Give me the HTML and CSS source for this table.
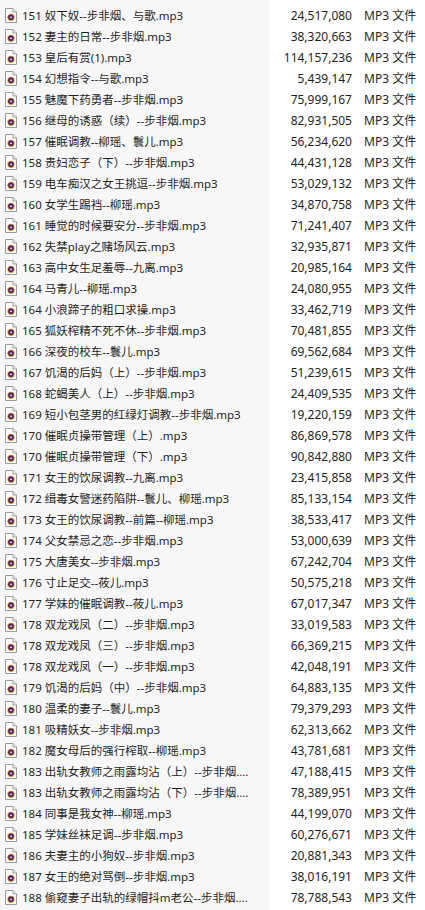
FILE: index.html
```html
<!DOCTYPE html>
<html lang="zh-CN">
<head>
<meta charset="utf-8">
<title>文件列表</title>
<link rel="stylesheet" href="styles.css">
</head>
<body>
<svg width="0" height="0" class="defs" aria-hidden="true">
  <defs>
    <symbol id="mp3" viewBox="0 0 12 15">
      <path d="M0.5 0.5 H8 L11.5 4 V14.5 H0.5 Z" fill="#fff" stroke="#9a9a9a"/>
      <path d="M8 0.5 V4 H11.5" fill="#eee" stroke="#9a9a9a"/>
      <circle cx="6" cy="9.3" r="3.6" fill="#d98a2b"/>
      <circle cx="6" cy="9.3" r="2.7" fill="#4b2466"/>
      <circle cx="6" cy="9.3" r="0.9" fill="#fff"/>
    </symbol>
  </defs>
</svg>
<div class="list">
  <div class="row"><div class="name"><svg class="ico"><use href="#mp3"/></svg><span>151 奴下奴--步非烟、与歌.mp3</span></div><div class="size">24,517,080</div><div class="type">MP3 文件</div></div>
  <div class="row"><div class="name"><svg class="ico"><use href="#mp3"/></svg><span>152 妻主的日常--步非烟.mp3</span></div><div class="size">38,320,663</div><div class="type">MP3 文件</div></div>
  <div class="row"><div class="name"><svg class="ico"><use href="#mp3"/></svg><span>153 皇后有赏(1).mp3</span></div><div class="size">114,157,236</div><div class="type">MP3 文件</div></div>
  <div class="row"><div class="name"><svg class="ico"><use href="#mp3"/></svg><span>154 幻想指令--与歌.mp3</span></div><div class="size">5,439,147</div><div class="type">MP3 文件</div></div>
  <div class="row"><div class="name"><svg class="ico"><use href="#mp3"/></svg><span>155 魅魔下药勇者--步非烟.mp3</span></div><div class="size">75,999,167</div><div class="type">MP3 文件</div></div>
  <div class="row"><div class="name"><svg class="ico"><use href="#mp3"/></svg><span>156 继母的诱惑（续）--步非烟.mp3</span></div><div class="size">82,931,505</div><div class="type">MP3 文件</div></div>
  <div class="row"><div class="name"><svg class="ico"><use href="#mp3"/></svg><span>157 催眠调教--柳瑶、鬟儿.mp3</span></div><div class="size">56,234,620</div><div class="type">MP3 文件</div></div>
  <div class="row"><div class="name"><svg class="ico"><use href="#mp3"/></svg><span>158 贵妇恋子（下）--步非烟.mp3</span></div><div class="size">44,431,128</div><div class="type">MP3 文件</div></div>
  <div class="row"><div class="name"><svg class="ico"><use href="#mp3"/></svg><span>159 电车痴汉之女王挑逗--步非烟.mp3</span></div><div class="size">53,029,132</div><div class="type">MP3 文件</div></div>
  <div class="row"><div class="name"><svg class="ico"><use href="#mp3"/></svg><span>160 女学生踢裆--柳瑶.mp3</span></div><div class="size">34,870,758</div><div class="type">MP3 文件</div></div>
  <div class="row"><div class="name"><svg class="ico"><use href="#mp3"/></svg><span>161 睡觉的时候要安分--步非烟.mp3</span></div><div class="size">71,241,407</div><div class="type">MP3 文件</div></div>
  <div class="row"><div class="name"><svg class="ico"><use href="#mp3"/></svg><span>162 失禁play之赌场风云.mp3</span></div><div class="size">32,935,871</div><div class="type">MP3 文件</div></div>
  <div class="row"><div class="name"><svg class="ico"><use href="#mp3"/></svg><span>163 高中女生足羞辱--九离.mp3</span></div><div class="size">20,985,164</div><div class="type">MP3 文件</div></div>
  <div class="row"><div class="name"><svg class="ico"><use href="#mp3"/></svg><span>164 马青儿--柳瑶.mp3</span></div><div class="size">24,080,955</div><div class="type">MP3 文件</div></div>
  <div class="row"><div class="name"><svg class="ico"><use href="#mp3"/></svg><span>164 小浪蹄子的粗口求操.mp3</span></div><div class="size">33,462,719</div><div class="type">MP3 文件</div></div>
  <div class="row"><div class="name"><svg class="ico"><use href="#mp3"/></svg><span>165 狐妖榨精不死不休--步非烟.mp3</span></div><div class="size">70,481,855</div><div class="type">MP3 文件</div></div>
  <div class="row"><div class="name"><svg class="ico"><use href="#mp3"/></svg><span>166 深夜的校车--鬟儿.mp3</span></div><div class="size">69,562,684</div><div class="type">MP3 文件</div></div>
  <div class="row"><div class="name"><svg class="ico"><use href="#mp3"/></svg><span>167 饥渴的后妈（上）--步非烟.mp3</span></div><div class="size">51,239,615</div><div class="type">MP3 文件</div></div>
  <div class="row"><div class="name"><svg class="ico"><use href="#mp3"/></svg><span>168 蛇蝎美人（上）--步非烟.mp3</span></div><div class="size">24,409,535</div><div class="type">MP3 文件</div></div>
  <div class="row"><div class="name"><svg class="ico"><use href="#mp3"/></svg><span>169 短小包茎男的红绿灯调教--步非烟.mp3</span></div><div class="size">19,220,159</div><div class="type">MP3 文件</div></div>
  <div class="row"><div class="name"><svg class="ico"><use href="#mp3"/></svg><span>170 催眠贞操带管理（上）.mp3</span></div><div class="size">86,869,578</div><div class="type">MP3 文件</div></div>
  <div class="row"><div class="name"><svg class="ico"><use href="#mp3"/></svg><span>170 催眠贞操带管理（下）.mp3</span></div><div class="size">90,842,880</div><div class="type">MP3 文件</div></div>
  <div class="row"><div class="name"><svg class="ico"><use href="#mp3"/></svg><span>171 女王的饮尿调教--九离.mp3</span></div><div class="size">23,415,858</div><div class="type">MP3 文件</div></div>
  <div class="row"><div class="name"><svg class="ico"><use href="#mp3"/></svg><span>172 缉毒女警迷药陷阱--鬟儿、柳瑶.mp3</span></div><div class="size">85,133,154</div><div class="type">MP3 文件</div></div>
  <div class="row"><div class="name"><svg class="ico"><use href="#mp3"/></svg><span>173 女王的饮尿调教--前篇--柳瑶.mp3</span></div><div class="size">38,533,417</div><div class="type">MP3 文件</div></div>
  <div class="row"><div class="name"><svg class="ico"><use href="#mp3"/></svg><span>174 父女禁忌之恋--步非烟.mp3</span></div><div class="size">53,000,639</div><div class="type">MP3 文件</div></div>
  <div class="row"><div class="name"><svg class="ico"><use href="#mp3"/></svg><span>175 大唐美女--步非烟.mp3</span></div><div class="size">67,242,704</div><div class="type">MP3 文件</div></div>
  <div class="row"><div class="name"><svg class="ico"><use href="#mp3"/></svg><span>176 寸止足交--莜儿.mp3</span></div><div class="size">50,575,218</div><div class="type">MP3 文件</div></div>
  <div class="row"><div class="name"><svg class="ico"><use href="#mp3"/></svg><span>177 学妹的催眠调教--莜儿.mp3</span></div><div class="size">67,017,347</div><div class="type">MP3 文件</div></div>
  <div class="row"><div class="name"><svg class="ico"><use href="#mp3"/></svg><span>178 双龙戏凤（二）--步非烟.mp3</span></div><div class="size">33,019,583</div><div class="type">MP3 文件</div></div>
  <div class="row"><div class="name"><svg class="ico"><use href="#mp3"/></svg><span>178 双龙戏凤（三）--步非烟.mp3</span></div><div class="size">66,369,215</div><div class="type">MP3 文件</div></div>
  <div class="row"><div class="name"><svg class="ico"><use href="#mp3"/></svg><span>178 双龙戏凤（一）--步非烟.mp3</span></div><div class="size">42,048,191</div><div class="type">MP3 文件</div></div>
  <div class="row"><div class="name"><svg class="ico"><use href="#mp3"/></svg><span>179 饥渴的后妈（中）--步非烟.mp3</span></div><div class="size">64,883,135</div><div class="type">MP3 文件</div></div>
  <div class="row"><div class="name"><svg class="ico"><use href="#mp3"/></svg><span>180 温柔的妻子--鬟儿.mp3</span></div><div class="size">79,379,293</div><div class="type">MP3 文件</div></div>
  <div class="row"><div class="name"><svg class="ico"><use href="#mp3"/></svg><span>181 吸精妖女--步非烟.mp3</span></div><div class="size">62,313,662</div><div class="type">MP3 文件</div></div>
  <div class="row"><div class="name"><svg class="ico"><use href="#mp3"/></svg><span>182 魔女母后的强行榨取--柳瑶.mp3</span></div><div class="size">43,781,681</div><div class="type">MP3 文件</div></div>
  <div class="row"><div class="name"><svg class="ico"><use href="#mp3"/></svg><span>183 出轨女教师之雨露均沾（上）--步非烟....</span></div><div class="size">47,188,415</div><div class="type">MP3 文件</div></div>
  <div class="row"><div class="name"><svg class="ico"><use href="#mp3"/></svg><span>183 出轨女教师之雨露均沾（下）--步非烟....</span></div><div class="size">78,389,951</div><div class="type">MP3 文件</div></div>
  <div class="row"><div class="name"><svg class="ico"><use href="#mp3"/></svg><span>184 同事是我女神--柳瑶.mp3</span></div><div class="size">44,199,070</div><div class="type">MP3 文件</div></div>
  <div class="row"><div class="name"><svg class="ico"><use href="#mp3"/></svg><span>185 学妹丝袜足调--步非烟.mp3</span></div><div class="size">60,276,671</div><div class="type">MP3 文件</div></div>
  <div class="row"><div class="name"><svg class="ico"><use href="#mp3"/></svg><span>186 夫妻主的小狗奴--步非烟.mp3</span></div><div class="size">20,881,343</div><div class="type">MP3 文件</div></div>
  <div class="row"><div class="name"><svg class="ico"><use href="#mp3"/></svg><span>187 女王的绝对骂倒--步非烟.mp3</span></div><div class="size">38,016,191</div><div class="type">MP3 文件</div></div>
  <div class="row"><div class="name"><svg class="ico"><use href="#mp3"/></svg><span>188 偷窥妻子出轨的绿帽抖m老公--步非烟....</span></div><div class="size">78,788,543</div><div class="type">MP3 文件</div></div>
</div>
</body>
</html>
```

FILE: styles.css
```css
html, body {
  margin: 0;
  padding: 0;
  background: #ffffff;
}

body {
  font-family: "Noto Sans", "Noto Sans CJK SC", sans-serif;
  font-size: 12px;
  line-height: 16px;
  color: #1f1f1f;
}

.defs {
  position: absolute;
  width: 0;
  height: 0;
  overflow: hidden;
}

.list {
  display: block;
  background: linear-gradient(to right, #f7f7f7 0, #f7f7f7 270px, #ffffff 270px);
  padding: 5px 0 2px;
}

.row {
  display: grid;
  grid-template-columns: 270px 70px 1fr;
  column-gap: 12px;
  height: 21px;
  align-items: center;
  overflow: hidden;
}

.name {
  display: flex;
  align-items: center;
  gap: 5px;
  padding-left: 5px;
  white-space: nowrap;
  overflow: hidden;
  font-size: 11.5px;
}

.ico {
  width: 12px;
  height: 15px;
  flex: none;
}

.size {
  text-align: right;
  white-space: nowrap;
}

.type {
  white-space: nowrap;
}
```
